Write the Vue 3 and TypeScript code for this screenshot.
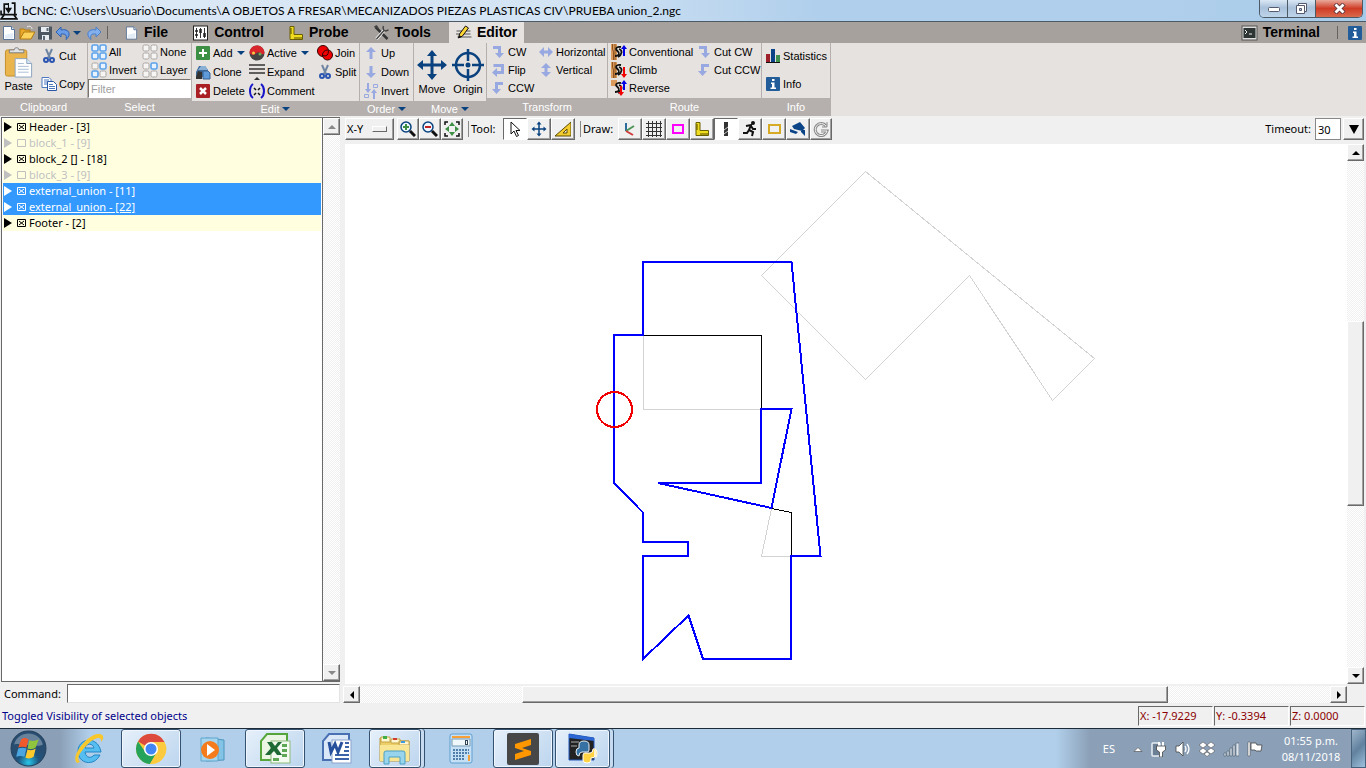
<script setup lang="ts">
import { ref } from 'vue'

interface Tool {
  icon: string
  label: string
  caret?: boolean
  w?: number
}
interface Column {
  kind: string
  items: Tool[]
}
interface Group {
  id: string
  title: string
  caret?: boolean
  columns: Column[]
}

const sheet =
  '<path d="M2.500 1.500h8l3 3v10h-11z" fill="#fff" stroke="#5b7599"/><path d="M10.500 1.500v3h3" fill="#dce8f6" stroke="#5b7599"/><path d="M4 10l8-2v5.500H4z" fill="#e3edf8"/>'
const scissors =
  '<path d="M5 1l4 9M11 1L7 10" stroke="#6f86a3" stroke-width="2" fill="none"/><circle cx="5" cy="12" r="2" fill="none" stroke="#2b55b0" stroke-width="2"/><circle cx="11" cy="12" r="2" fill="none" stroke="#2b55b0" stroke-width="2"/>'
const info =
  '<rect x="1" y="1" width="14" height="14" rx="1" fill="#235d99"/><path d="M7 3h2.500v2H7zM6 6.500h3.500v5H11V13H5.500v-1.500H7V8H6z" fill="#fff"/>'
const ruler =
  '<path d="M2 1.500h4v8h8.500v5H2z" fill="#f0dc1e" stroke="#6b6100"/><path d="M2 4h2M2 6h2M2 8h2M7 12v2.500M9 12v2.500M11 12v2.500M13 12v2.500" stroke="#554c00"/>'
const turnDown = '<path d="M3 2h8v7h3l-4.500 5L5 9h3V5H3z" fill="#98a8e0"/>'
const turnLeft = '<path d="M13 2H5v7H2l4.500 5L11 9H8V5h5z" fill="#98a8e0"/>'
const arrowUp = '<path d="M8 2l5 5H9.500v7h-3V7H3z" fill="#98a8e0"/>'
const arrowDown = '<path d="M8 14l5-5H9.500V2h-3v7H3z" fill="#98a8e0"/>'
const four = (fill: string[]) =>
  [[1, 1], [9, 1], [1, 9], [9, 9]]
    .map(
      ([x, y], i) =>
        `<rect x="${x}" y="${y}" width="6" height="6" rx="1.500" fill="${fill[i] === 'b' ? '#e8f3ff' : '#f6f5f4'}" stroke="${fill[i] === 'b' ? '#5ba3ec' : '#aaa6a3'}" stroke-width="${fill[i] === 'b' ? 1.6 : 1}"/>`,
    )
    .join('')
const wood =
  '<path d="M0 0h6v16H0z" fill="#d99a5b"/><path d="M1.500 0v5l1 3v8M4 0v16" stroke="#8d5320" fill="none"/>'
const cutter =
  '<path d="M10 3c-5-1-6 2-3.500 4s2 5-2.500 5M8 5c4 1 3 6-1 8" fill="none" stroke="#111" stroke-width="1.800"/>'
const blueUp = '<path d="M13 1l3 4h-2v7h-2V5h-2z" fill="#0000e8"/>'
const redDown = '<path d="M13 16l3-4h-2V5h-2v7h-2z" fill="#f00000"/>'
const cross =
  '<path d="M16 1l5 6h-3.500v7.500H25V11l6 5-6 5v-3.500h-7.500V25H21l-5 6-5-6h3.500v-7.500H7V21l-6-5 6-5v3.500h7.500V7H11z" fill="#09427f"/>'
const magnifier =
  '<circle cx="6" cy="6" r="5" fill="#eef7ff" stroke="#09427f" stroke-width="1.500"/><path d="M10 10l5 5" stroke="#111" stroke-width="3"/>'

const icons: Record<string, string> = {
  sheet,
  scissors,
  info,
  ruler,
  turnDown,
  turnLeft,
  arrowUp,
  arrowDown,
  logo: '<path d="M4 11V2h4m3-1h3v10M1 8v4h3m8 0h4M4 12L1 16h15l-3-4z" fill="none" stroke="#111" stroke-width="1.600"/><path d="M8 1v6M5.500 6h5L8 10z" fill="#111" stroke="#111"/>',
  open: '<path d="M1 14V4h4l1 1h5v3H5z" fill="#e8a92a" stroke="#b37a10"/><path d="M1 14L5 7h11l-4 7z" fill="#fbd25c" stroke="#b37a10"/><path d="M8 2c3-2 5 0 5 2" stroke="#eee" fill="none"/>',
  save: '<path d="M1 1.500h14v13H1z" fill="#4c5762"/><path d="M4 2h8v5H4zM5 10h7v5H5z" fill="#e8edf1"/><path d="M9.500 3h2v3h-2zM6 11h2v4H6z" fill="#5d6975"/>',
  undo: '<path d="M1 7l5-5v3c8-2 11 5 5 9.500 1-4 0-6-5-5.500V12z" fill="#6b9ce6" stroke="#2e62b4"/>',
  redo: '<path d="M15 7l-5-5v3c-8-2-11 5-5 9.500-1-4 0-6 5-5.500V12z" fill="#83b0ed" stroke="#4b7fca"/>',
  control:
    '<rect x="1" y="1" width="14" height="14" fill="#fff" stroke="#222"/><path d="M4 3v10M8 3v10M12 3v10" stroke="#333"/><path d="M2.500 10h3M6.500 5h3M6.500 7h3M10.500 9h3M10.500 11h3M2.500 6h3" stroke="#222" stroke-width="1.500"/>',
  tools:
    '<path d="M2 2l12 12" stroke="#333" stroke-width="2.500"/><path d="M3 14l8-9" stroke="#fff" stroke-width="3"/><path d="M3 14l8-9M10 1c-1 2 0 5 2 5l3-1M1 2l2-1 2 3" fill="none" stroke="#444" stroke-width="1.500"/>',
  editor:
    '<path d="M1 6h14M0 9h15M2 12h14" stroke="#555"/><path d="M3 13l1-4 6-8 3 2-6 8z" fill="#ffd633" stroke="#111"/><path d="M3 13l1-3 2 2z" fill="#111"/>',
  terminal:
    '<rect x="1" y="1" width="15" height="14" fill="#ddd" stroke="#555"/><rect x="2.500" y="3" width="12" height="10" fill="#2c3434"/><path d="M4 5l2 2-2 2M8 9h3" fill="none" stroke="#eee"/>',
  paste:
    '<rect x="2" y="3" width="22" height="27" rx="2" fill="#eab54d" stroke="#c58f2a"/><path d="M6 6V3h5c0-3 5-3 5 0h5v3z" fill="#dfe2e4" stroke="#7c7c7c"/><path d="M12 12h12l5 5v14H12z" fill="#fff" stroke="#8aa3c0"/><path d="M24 12v5h5" fill="#dbe7f5" stroke="#8aa3c0"/><path d="M15 17h6M15 20h11M15 23h11M15 26h11" stroke="#a9bdd6"/>',
  copy: '<path d="M1 1.500h7l2 2v8H1z" fill="#fff" stroke="#4f79bd"/><path d="M3 4h5M3 6h5M3 8h3" stroke="#4f79bd"/><path d="M6.500 5.500h6l3 3v6h-9z" fill="#fff" stroke="#2c58a8"/><path d="M8 8.500h4M8 10.500h6M8 12.500h6" stroke="#4f79bd"/>',
  all: four(['b', 'b', 'b', 'b']),
  none: four(['g', 'g', 'g', 'g']),
  invert: four(['g', 'b', 'b', 'g']),
  layer: four(['g', 'b', 'g', 'g']),
  add: '<rect x="1" y="1" width="14" height="14" rx="1" fill="#3c8f43"/><path d="M8 4v8M4 8h8" stroke="#fff" stroke-width="2"/>',
  del: '<rect x="1" y="1" width="14" height="14" rx="1" fill="#a91f24"/><path d="M5 5l6 6M11 5l-6 6" stroke="#fff" stroke-width="2.500"/>',
  clone:
    '<path d="M1 13V8l3-6h6l3 4v7z" fill="#3e6c9c"/><path d="M3 6l3-4h4l3 4z" fill="#8ab0d5"/><path d="M1 13l2-6 4 1v7H1z" fill="#333"/><path d="M8 7h5l2 2v6H8z" fill="#5f9adb" stroke="#37618f"/>',
  active:
    '<circle cx="8" cy="8" r="7.500" fill="#444"/><path d="M.5 8C1-2 15-2 15.500 8c-3 4-5-3-8 0s-5 2-7 0z" fill="#d9262c"/><circle cx="4.500" cy="8" r="1.500" fill="#f1cf45"/><circle cx="11" cy="9" r="1.500" fill="#6dab55"/>',
  expand: '<path d="M0 1h16M0 5h16M0 9h16" stroke="#333" stroke-width="1.500"/><path d="M5 16l3-3 3 3z" fill="#333"/>',
  comment:
    '<path d="M4 1c-4 3-4 11 0 14M12 1c4 3 4 11 0 14" fill="none" stroke="#1717c9" stroke-width="2"/><path d="M5 5l2 2M11 5L9 7M5 12l2-2M11 12l-2-2" stroke="#111" stroke-width="1.500"/>',
  join: '<circle cx="6" cy="6" r="5.500" fill="#f00000" stroke="#300"/><circle cx="10.500" cy="10" r="5" fill="#f00000" stroke="#300"/><path d="M5.500 10.500q6 2 6-5" fill="none" stroke="#300"/>',
  swap: '<path d="M4 0v6H2l3 4 3-4H6V0zM12 16v-6h2l-3-4-3 4h2v6z" fill="#98a8e0"/><path d="M10.500 1.500h4v3h-4zM1.500 11.500h4v3h-4z" fill="none" stroke="#98a8e0"/>',
  move: cross,
  moveSmall: `<g transform="scale(.5)">${cross}</g>`,
  origin:
    '<circle cx="16" cy="16" r="12" fill="none" stroke="#09427f" stroke-width="2.500"/><path d="M16 0v12M16 20v12M0 16h12M20 16h12" stroke="#09427f" stroke-width="2.500"/><circle cx="16" cy="16" r="2.500" fill="#09427f"/>',
  flip: '<path d="M5 5V3.500h7.500v7H6" fill="none" stroke="#98a8e0" stroke-width="3"/><path d="M7 6v9L2 10.500z" fill="#98a8e0"/>',
  horiz: '<path d="M1 8l5-5v3.500h4V3l5 5-5 5V9.500H6V13z" fill="#98a8e0"/>',
  vert: '<path d="M8 1l5 5H9.500v4H13l-5 5-5-5h3.500V6H3z" fill="#98a8e0"/>',
  conv: wood + cutter + blueUp,
  climb: wood + cutter + redDown,
  reverse: '<path d="M0 0h6v6H0z" fill="#d99a5b"/>' + cutter + '<path d="M13 0l3 4h-2v6h-2V4h-2z" fill="#0000e8"/><path d="M10 16l3-4h-2V6H9v6H7z" fill="#f00000"/>',
  stats: '<path d="M1 6h4v8H1z" fill="#9d1f2a"/><path d="M6 1h4v13H6z" fill="#0b4486"/><path d="M11 7h4v7h-4z" fill="#3f9150"/><path d="M1 14.500h14" stroke="#111"/>',
  zoomIn: magnifier + '<path d="M6 3v6M3 6h6" stroke="#3c8f43" stroke-width="2"/>',
  zoomOut: magnifier + '<path d="M3 6h6" stroke="#c21f24" stroke-width="2"/>',
  fit: '<path d="M1 4V1h3M12 1h3v3M15 12v3h-3M4 15H1v-3" fill="none" stroke="#111" stroke-width="1.500"/><path d="M8 1l3 4H5zM8 15l3-4H5zM1 8l4-3v6zM15 8l-4-3v6z" fill="#3c8f43"/>',
  pointer: '<path d="M4 1v12l3-3 2.500 5.500 2-1L9 9.500h4z" fill="#fff" stroke="#111"/>',
  square: '<path d="M0 15L16 1v14z" fill="#f2cc2e" stroke="#5c4a00"/><path d="M8 12l4-4v4z" fill="#eee" stroke="#5c4a00"/>',
  axes: '<path d="M4 2v8" stroke="#2b6c9c" stroke-width="2"/><path d="M4 10l8-5" stroke="#4e9457" stroke-width="2"/><path d="M4 10l7 4" stroke="#cf3b3b" stroke-width="2"/>',
  grid: '<path d="M2.500 0v16M6.500 0v16M10.500 0v16M14.500 0v16M0 2.500h16M0 6.500h16M0 10.500h16M0 14.500h16" stroke="#333"/>',
  magenta: '<rect x="3" y="4" width="10" height="8" fill="none" stroke="#f0f" stroke-width="2"/>',
  endmill: '<path d="M6 1h4v14H6z" fill="#333"/><path d="M6 9l4-3M6 13l4-3" stroke="#ccc"/>',
  runner:
    '<circle cx="11" cy="2" r="2" fill="#111"/><path d="M4 5l5-1-2 5 4 2-1 4M7 9l-2 3H1M9 5l2 3h3" fill="none" stroke="#111" stroke-width="2"/>',
  yellow: '<rect x="3" y="4" width="11" height="8" fill="none" stroke="#d6aa24" stroke-width="2"/>',
  camera: '<path d="M2 5l8-4 5 6-3 3-8-2zM11 9h4v6l-4-4zM0 8l8 3-2 2-6-2z" fill="#0b4486"/>',
  refresh: '<path d="M13 5A6 6 0 1 0 14 10H8" fill="none" stroke="#888" stroke-width="3"/><path d="M13 5A6 6 0 1 0 14 10H8" fill="none" stroke="#f4f4f4"/><path d="M14 1v5H9" stroke="#888" fill="none"/>',
}

const quick: Tool[] = [
  { icon: 'sheet', label: 'New' },
  { icon: 'open', label: 'Open' },
  { icon: 'save', label: 'Save' },
  { icon: 'undo', label: 'Undo', caret: true },
  { icon: 'redo', label: 'Redo' },
]
const tabs: Tool[] = [
  { icon: 'sheet', label: 'File', w: 14 },
  { icon: 'control', label: 'Control', w: 16 },
  { icon: 'ruler', label: 'Probe', w: 15 },
  { icon: 'tools', label: 'Tools', w: 16 },
  { icon: 'editor', label: 'Editor', w: 16 },
]
const activeTab = ref('Editor')

const groups: Group[] = [
  {
    id: 'clipboard',
    title: 'Clipboard',
    columns: [
      { kind: 'big', items: [{ icon: 'paste', label: 'Paste' }] },
      { kind: 'spread', items: [{ icon: 'scissors', label: 'Cut' }, { icon: 'copy', label: 'Copy' }] },
    ],
  },
  {
    id: 'select',
    title: 'Select',
    columns: [
      { kind: 'tight', items: [{ icon: 'all', label: 'All' }, { icon: 'invert', label: 'Invert' }] },
      { kind: 'tight', items: [{ icon: 'none', label: 'None' }, { icon: 'layer', label: 'Layer' }] },
    ],
  },
  {
    id: 'edit',
    title: 'Edit',
    caret: true,
    columns: [
      { kind: 'rows', items: [{ icon: 'add', label: 'Add', caret: true }, { icon: 'clone', label: 'Clone' }, { icon: 'del', label: 'Delete' }] },
      { kind: 'rows', items: [{ icon: 'active', label: 'Active', caret: true }, { icon: 'expand', label: 'Expand' }, { icon: 'comment', label: 'Comment' }] },
      { kind: 'rows', items: [{ icon: 'join', label: 'Join' }, { icon: 'scissors', label: 'Split' }] },
    ],
  },
  {
    id: 'order',
    title: 'Order',
    caret: true,
    columns: [
      { kind: 'rows', items: [{ icon: 'arrowUp', label: 'Up' }, { icon: 'arrowDown', label: 'Down' }, { icon: 'swap', label: 'Invert' }] },
    ],
  },
  {
    id: 'move',
    title: 'Move',
    caret: true,
    columns: [
      { kind: 'big', items: [{ icon: 'move', label: 'Move' }] },
      { kind: 'big', items: [{ icon: 'origin', label: 'Origin' }] },
    ],
  },
  {
    id: 'transform',
    title: 'Transform',
    columns: [
      { kind: 'tight', items: [{ icon: 'turnDown', label: 'CW' }, { icon: 'flip', label: 'Flip' }, { icon: 'turnLeft', label: 'CCW' }] },
      { kind: 'tight', items: [{ icon: 'horiz', label: 'Horizontal' }, { icon: 'vert', label: 'Vertical' }] },
    ],
  },
  {
    id: 'route',
    title: 'Route',
    columns: [
      { kind: 'tight', items: [{ icon: 'conv', label: 'Conventional' }, { icon: 'climb', label: 'Climb' }, { icon: 'reverse', label: 'Reverse' }] },
      { kind: 'tight', items: [{ icon: 'turnDown', label: 'Cut CW' }, { icon: 'turnLeft', label: 'Cut CCW' }] },
    ],
  },
  {
    id: 'info',
    title: 'Info',
    columns: [{ kind: 'spread', items: [{ icon: 'stats', label: 'Statistics' }, { icon: 'info', label: 'Info' }] }],
  },
]

const blocks = ref([
  { name: 'Header - [3]', on: true, selected: false, current: false },
  { name: 'block_1 - [9]', on: false, selected: false, current: false },
  { name: 'block_2 [] - [18]', on: true, selected: false, current: false },
  { name: 'block_3 - [9]', on: false, selected: false, current: false },
  { name: 'external_union - [11]', on: true, selected: true, current: false },
  { name: 'external_union - [22]', on: true, selected: true, current: true },
  { name: 'Footer - [2]', on: true, selected: false, current: false },
])

const zoomTools = ['zoomIn', 'zoomOut', 'fit']
const modeTools = ['pointer', 'moveSmall', 'square']
const drawTools = ['axes', 'grid', 'magenta', 'ruler', 'endmill', 'runner', 'yellow', 'camera', 'refresh']
const pressed = ['pointer', 'endmill']

const filter = ref('')
const command = ref('')
const timeout = ref('30')
const position = ['X: -17.9229', 'Y: -0.3394', 'Z: 0.0000']
</script>

<template>
  <div class="desktop">
    <header class="title-bar">
      <svg class="i18" viewBox="0 0 17 17" v-html="icons.logo" />
      <h1>bCNC: C:\Users\Usuario\Documents\A OBJETOS A FRESAR\MECANIZADOS PIEZAS PLASTICAS CIV\PRUEBA union_2.ngc</h1>
      <div class="win-buttons">
        <button class="wb min" aria-label="Minimize">
          <svg width="14" height="12" viewBox="0 0 14 12"><rect x="1.500" y="4.500" width="11" height="4" rx="1" fill="#fff" stroke="#555a6e" /></svg>
        </button>
        <button class="wb max" aria-label="Restore">
          <svg width="13" height="13" viewBox="0 0 13 13"><path d="M3.500 1.500h8v8h-8z" fill="#fff" stroke="#555a6e" /><path d="M1.500 3.500h8v8h-8z" fill="#fff" stroke="#555a6e" /><path d="M4.500 6.500h2v2h-2z" fill="#b9cce0" stroke="#555a6e" /></svg>
        </button>
        <button class="wb close" aria-label="Close">
          <svg width="13" height="11" viewBox="0 0 13 11"><path d="M2 1l9 9M11 1L2 10" stroke="#60323a" stroke-width="4.500" /><path d="M2.500 1.500l8 8M10.500 1.500l-8 8" stroke="#fff" stroke-width="2.800" /></svg>
        </button>
      </div>
    </header>

    <nav class="menu-bar">
      <div class="quick">
        <button v-for="q in quick" :key="q.label" :class="{ split: q.caret }" :aria-label="q.label">
          <svg class="i16" viewBox="0 0 16 16" v-html="icons[q.icon]" />
          <i v-if="q.caret" class="caret" />
        </button>
      </div>
      <i class="rule" />
      <div class="tabs">
        <button v-for="t in tabs" :key="t.label" class="tab" :class="{ active: activeTab === t.label }" @click="activeTab = t.label">
          <svg :width="t.w" height="16" viewBox="1 0 15 16" v-html="icons[t.icon]" />{{ t.label }}
        </button>
      </div>
      <button class="tab terminal"><svg width="17" height="16" viewBox="0 0 17 16" v-html="icons.terminal" />Terminal</button>
      <i class="rule" />
      <button class="about" aria-label="About"><svg class="i16" viewBox="0 0 16 16" v-html="icons.info" /></button>
    </nav>

    <section class="ribbon">
      <div v-for="g in groups" :key="g.id" class="group" :class="g.id">
        <div class="group-body">
          <div v-for="(c, n) in g.columns" :key="n" class="col" :class="c.kind">
            <button v-for="t in c.items" :key="t.label" class="tool">
              <svg v-if="c.kind === 'big'" class="i32" viewBox="0 0 32 32" v-html="icons[t.icon]" />
              <svg v-else class="i16" viewBox="0 0 16 16" v-html="icons[t.icon]" />
              <span>{{ t.label }}</span><i v-if="t.caret" class="caret" />
            </button>
          </div>
          <input v-if="g.id === 'select'" v-model="filter" class="filter" placeholder="Filter" aria-label="Filter" />
        </div>
        <div class="group-title" :class="{ menu: g.caret }">{{ g.title }}<i v-if="g.caret" class="caret" /></div>
      </div>
    </section>

    <main class="work">
      <aside class="side">
        <div class="editor-list">
          <ul class="blocks">
            <li v-for="b in blocks" :key="b.name" :class="{ off: !b.on, selected: b.selected, current: b.current }">
              <svg width="26" height="16" viewBox="0 0 26 16">
                <path d="M1 3l8 5-8 5z" fill="currentColor" />
                <path d="M14.500 4.500h8v7h-8z" fill="none" stroke="currentColor" />
                <path v-if="b.on" d="M16 6l5 4M21 6l-5 4" stroke="currentColor" />
              </svg><span>{{ b.name }}</span>
            </li>
          </ul>
          <div class="vbar idle">
            <button class="sb" aria-label="Scroll list up"><i class="ar up" /></button>
            <button class="sb" aria-label="Scroll list down"><i class="ar down" /></button>
          </div>
        </div>
        <div class="command">
          <label for="command">Command:</label>
          <input id="command" v-model="command" />
        </div>
      </aside>

      <section class="stage">
        <div class="view-bar">
          <button class="view">X-Y<i /></button>
          <div class="set first">
            <button v-for="t in zoomTools" :key="t" class="tb" :aria-label="t"><svg viewBox="0 0 16 16" v-html="icons[t]" /></button>
          </div>
          <i class="bar" /><span class="cap tool-cap">Tool:</span>
          <div class="set">
            <button v-for="t in modeTools" :key="t" class="tb wide" :class="{ pressed: pressed.includes(t) }" :aria-label="t"><svg viewBox="0 0 16 16" v-html="icons[t]" /></button>
          </div>
          <i class="bar" /><span class="cap draw-cap">Draw:</span>
          <div class="set">
            <button v-for="t in drawTools" :key="t" class="tb" :class="{ wide: t !== 'refresh', pressed: pressed.includes(t) }" :aria-label="t"><svg viewBox="0 0 16 16" v-html="icons[t]" /></button>
          </div>
          <div class="timeout">
            <label for="timeout">Timeout:</label>
            <input id="timeout" v-model="timeout" />
            <button class="drop" aria-label="Timeout values"><svg width="10" height="9" viewBox="0 0 10 9"><path d="M0 0h10L5 9z" /></svg></button>
          </div>
        </div>

        <div class="canvas-grid">
          <svg class="canvas" viewBox="345 144 1002 540" fill="none" shape-rendering="crispEdges">
            <g stroke="#d3d3d3">
              <path d="M865.500 171.500L1094.500 358.500L1052.500 400.500L969.500 275.500L865.500 379.500L761.500 275.500z" />
              <path d="M643.500 335.500V409.500H761.500M771.500 508.500L761.500 556.500H791.500" />
            </g>
            <path d="M643 335.500H761.500V409M771 508.500L791.500 512.500V556" stroke="#000" />
            <g stroke="#0000ff" stroke-width="2">
              <path d="M643 262H791.500L820.500 556H791V659H703L688.500 615.500L643 659V556H688V542H643V512.500L614 483V335H643z" />
              <path d="M658 483H761V409H791.500L771.500 508z" />
            </g>
            <circle cx="614.500" cy="409.500" r="17.500" stroke="#f00000" stroke-width="2" />
          </svg>
          <div class="vbar">
            <button class="sb" aria-label="Scroll up"><i class="ar up" /></button>
            <i class="pad" /><i class="thumb" /><i class="pad end" />
            <button class="sb" aria-label="Scroll down"><i class="ar down" /></button>
          </div>
          <div class="hbar">
            <button class="sb" aria-label="Scroll left"><i class="ar left" /></button>
            <i class="pad" /><i class="thumb" /><i class="pad end" />
            <button class="sb" aria-label="Scroll right"><i class="ar right" /></button>
          </div>
        </div>
      </section>
    </main>

    <div class="status">
      <span class="message">Toggled Visibility of selected objects</span>
      <output v-for="p in position" :key="p">{{ p }}</output>
    </div>

    <footer class="taskbar">
      <button class="task start" aria-label="Start">
        <svg viewBox="0 0 36 36">
          <defs><radialGradient id="orb" cy=".9"><stop offset="0" stop-color="#29c6e8" /><stop offset=".6" stop-color="#1e5580" /><stop offset="1" stop-color="#274d70" /></radialGradient></defs>
          <circle cx="18" cy="18" r="17" fill="url(#orb)" stroke="#26425e" /><path d="M4 14C8 0 28 0 32 14 24 18 12 12 4 14z" fill="#fff" opacity=".3" />
          <path d="M11 9c3-2 4-1 7 0l-2 8c-3-1-5-1-8 0z" fill="#f0592b" /><path d="M19 10c3 1 5 1 9-1l-3 8c-3 2-5 2-8 1z" fill="#8fc63d" /><path d="M8 18c3-1 5-1 8 0l-2 8c-3-1-5-1-8 0z" fill="#4ba5e0" /><path d="M17 19c3 1 5 1 8-1l-2 8c-3 2-5 2-8 1z" fill="#fdc92d" />
        </svg>
      </button>
      <button class="task ie" aria-label="Internet Explorer">
        <svg viewBox="0 0 32 32"><path d="M28 19H12c1 7 7 6 9 3h6C21 34 5 31 5 18S25 2 28 19zM12 15h9c-1-5-8-5-9 0z" fill="#55bdf0" stroke="#2385c4" /><path d="M4 30C-3 24 13 3 24 1c8-1 7 5 4 8 1-7-7-4-13 2S2 25 7 29z" fill="#f8c72c" /></svg>
      </button>
      <button class="task open chrome" aria-label="Chrome">
        <svg viewBox="0 0 32 32"><circle cx="16" cy="16" r="15" fill="#fbca3f" /><path d="M16 16L3 8.500A15 15 0 0 1 29.500 9z" fill="#dd4b3e" /><path d="M3 8.500A15 15 0 0 0 15 31l6-10-10-1z" fill="#25a35a" /><path d="M16 9h13.500A15 15 0 0 1 15 31l8-14z" fill="#fbca3f" /><circle cx="16" cy="16" r="7" fill="#fff" /><circle cx="16" cy="16" r="5.500" fill="#4285f4" /></svg>
      </button>
      <button class="task media" aria-label="Media Player">
        <svg viewBox="0 0 32 32"><path d="M9 5l18 2v20l-18 1z" fill="#83c4e6" stroke="#4f94be" /><path d="M4 5h17v23H4z" fill="#a6d5ee" stroke="#5fa5cc" /><circle cx="13" cy="17" r="9" fill="#f47c1c" /><path d="M10 11l8 6-8 6z" fill="#fff" /></svg>
      </button>
      <button class="task open excel" aria-label="Excel">
        <svg viewBox="0 0 32 32"><path d="M8 1h20v26H2V8z" fill="#eaf5e3" stroke="#55a63a" stroke-width="2" /><rect x="12" y="8" width="19" height="22" fill="#f3faef" stroke="#8dba7d" /><path d="M23 11h5v3h-5zM23 16h5v3h-5zM23 21h5v3h-5zM14 25h6v3h-6z" fill="#5ea755" /><path d="M8 9h5l3 4 3-4h4l-5 6 5 7h-5l-3-4-4 4H6l6-7z" fill="#1e6a34" /></svg>
      </button>
      <button class="task word" aria-label="Word">
        <svg viewBox="0 0 32 32"><path d="M8 1h20v26H2V8z" fill="#dbe8f8" stroke="#4a70b4" stroke-width="2" /><rect x="11" y="7" width="19" height="23" fill="#fff" stroke="#8ba3cc" /><path d="M24 10h4M24 14h4M23 18h5M14 22h14M14 26h14" stroke="#3c62a8" stroke-width="2" /><path d="M8 9l2 10 4-8 3 8 4-10" fill="none" stroke="#27509c" stroke-width="3" /></svg>
      </button>
      <button class="task open explorer stacked" aria-label="Explorer">
        <svg viewBox="0 0 32 32"><path d="M1 28V5h8l2 3h19v20z" fill="#edcf69" stroke="#b8963a" /><path d="M2 4h9v5H2zM12 6h9v4h-9zM20 8h10v4H20z" fill="#fff7d2" stroke="#c4a344" /><path d="M4 3h4v3H4z" fill="#3fae46" /><path d="M14 5h4v2h-4z" fill="#d13c32" /><path d="M22 8h4v2h-4z" fill="#3b9be0" /><path d="M1 12h29v16H1z" fill="#f8e694" /><path d="M5 31V20q0-2 2-2h17q2 0 2 2v11h-5v-7H10v7z" fill="#98d5ed" stroke="#4d9fc4" /></svg>
      </button>
      <button class="task calc" aria-label="Calculator">
        <svg viewBox="0 0 32 32"><rect x="5" y="1" width="22" height="29" rx="2" fill="#c5e0f5" stroke="#5f9fd0" /><path d="M7 3h18v2H7z" fill="#f6a03a" /><path d="M7 6h18v7H7z" fill="#eff7fb" stroke="#7799b0" /><rect x="20.500" y="7.500" width="2" height="4" fill="none" stroke="#345" /><path d="M8 17h16M8 20h16M8 23h12M8 26h12" stroke="#5080aa" stroke-width="2" stroke-dasharray="2 1" /><path d="M23 22h2v6h-2z" fill="#f6a03a" /></svg>
      </button>
      <button class="task open sublime" aria-label="Sublime Text">
        <svg viewBox="0 0 32 32"><rect width="32" height="32" rx="2" fill="#474747" /><path d="M8 11l16-5v6l-9 3 9 3v4L8 27v-6l9-3-9-3z" fill="#ff9800" /></svg>
      </button>
      <button class="task open python stacked" aria-label="Python">
        <svg viewBox="0 0 32 32"><path d="M2 1l25 4v22L2 27z" fill="#222" stroke="#2359bd" /><path d="M2 1l25 4v3L2 5z" fill="#2c66d2" /><path d="M4 9h8M4 13h6" stroke="#aaa" /><path d="M12 15v-3q0-4 5-4t5 4v5q0 2-2 2h-5q-3 0-3 4-3 0-3-4t3-4z" fill="#3671a3" stroke="#e8eef4" /><path d="M28 17v6q0 2-4 2v2q0 3-4 3t-4-3v-5q0-2 2-2h5q3 0 3-4 4-1 4 4t-2 4z" fill="#ffd343" stroke="#fff" /></svg>
      </button>

      <div class="tray">
        <span class="lang">ES</span>
        <svg class="chev" viewBox="0 0 10 16"><path d="M1 10.500l4-4 4 4z" fill="#fff" stroke="#444" stroke-width=".6" /></svg>
        <svg viewBox="0 0 16 16"><rect x="1" y="2" width="8" height="13" rx="1" fill="#6c8095" stroke="#e8eef4" stroke-width="1.500" /><path d="M8 1v4M12 1v4" stroke="#fff" stroke-width="2" /><path d="M5.500 5h9v4l-3 2v5h-3v-5l-3-2z" fill="#fff" stroke="#444" stroke-width=".8" /></svg>
        <svg viewBox="0 0 16 16"><path d="M1 5h3l4-4v14l-4-4H1z" fill="#fff" stroke="#444" stroke-width=".8" /><path d="M10 5q2 3 0 6M12 3q4 5 0 10" fill="none" stroke="#fff" stroke-width="1.300" /></svg>
        <svg viewBox="0 0 16 16"><path d="M4 1l4 3-4 3-4-3zM12 1l4 3-4 3-4-3zM4 7l4 3-4 3-4-3zM12 7l4 3-4 3-4-3zM8 11l3 2-3 2.500L5 13z" fill="#fff" stroke="#444" stroke-width=".5" /></svg>
        <svg viewBox="0 0 16 16"><path d="M1 12h2v3H1zM4 10h2v5H4zM7 7h2v8H7zM10 4h2v11h-2zM13 2h3v13h-3z" fill="#dde4ec" stroke="#4c5b6b" stroke-width=".6" /></svg>
        <svg viewBox="0 0 16 16"><path d="M1 1h2v14H1z" fill="#fff" stroke="#444" stroke-width=".5" /><path d="M4 2h5l1 2h5l-1 6H9L8 9H4z" fill="#fff" stroke="#444" stroke-width=".8" /></svg>
        <time class="clock"><span>01:55 p.m.</span><span>08/11/2018</span></time>
      </div>
      <button class="peek" aria-label="Show desktop" />
    </footer>
  </div>
</template>

<style>
body {
  margin: 0;
}
</style>

<style scoped>
* {
  box-sizing: border-box;
}
.desktop {
  display: flex;
  flex-direction: column;
  height: 100vh;
  overflow: hidden;
  background: #f0f0f0;
  color: #000;
  font: 11px/16px 'Noto Sans', 'Open Sans', sans-serif;
}
button {
  padding: 0;
  border: 0;
  background: none;
  color: inherit;
  font: inherit;
}
input {
  min-width: 0;
  padding: 0 2px;
  font: inherit;
  border: 1px solid #a0a0a0;
  border-radius: 0;
  background: #fff;
}
svg {
  flex: none;
  display: block;
}
.i16 {
  width: 16px;
  height: 16px;
}
.i18 {
  width: 18px;
  height: 18px;
}
.i32 {
  width: 32px;
  height: 32px;
}
.caret {
  display: inline-block;
  border: 4px solid transparent;
  border-top: 4px solid #09427f;
  border-bottom: 0;
}

.title-bar {
  display: flex;
  flex: none;
  align-items: center;
  height: 22px;
  border-bottom: 1px solid #4c5a66;
  background: linear-gradient(90deg, #dfeaf6, #d3e4f4 40%, #b0cfec 60%, #b0cfec 85%, #a6cbe9);
}
.title-bar h1 {
  flex: 1;
  margin: 0 0 0 4px;
  font: 400 12px/20px Lato, 'Open Sans', sans-serif;
  white-space: nowrap;
}
.win-buttons {
  display: flex;
  align-self: flex-start;
  height: 18px;
  margin-right: 3px;
  border: 1px solid #4c5a66;
  border-top: 0;
  border-radius: 0 0 5px 5px;
  overflow: hidden;
}
.wb {
  display: flex;
  align-items: center;
  justify-content: center;
  width: 28px;
  border-right: 1px solid #4c5a66;
  background: linear-gradient(#dbe8f4, #a9c1da 45%, #bed4ea);
}
.wb.close {
  width: 46px;
  border: 0;
  background: linear-gradient(#e9a99b, #cf3c25 50%, #da6a4d);
}

.menu-bar {
  display: flex;
  flex: none;
  align-items: center;
  height: 21px;
  background: #a6a19d;
}
.quick {
  display: flex;
  gap: 2px;
  padding-left: 1px;
}
.quick button {
  display: flex;
  align-items: center;
  gap: 2px;
}
.quick .split {
  padding-right: 3px;
}
.rule {
  width: 1px;
  height: 13px;
  margin: 0 5px;
  background: #66625f;
}
.tabs {
  display: flex;
  flex: 1;
  gap: 11px;
  align-self: stretch;
  padding-left: 5px;
}
.tab {
  display: flex;
  align-items: center;
  gap: 5px;
  height: 21px;
  padding: 0 7px;
  font: bold 14px/21px 'Liberation Sans', Arial, sans-serif;
}
.tab.active {
  background: #e6e2df;
}
.terminal {
  margin-right: 5px;
}
.about {
  margin: 0 3px 0 4px;
}

.ribbon {
  display: flex;
  flex: none;
  height: 73px;
  background: #e6e2df;
  font: 11px/16px 'Liberation Sans', Arial, sans-serif;
}
.group {
  display: flex;
  flex-direction: column;
  border-right: 1px solid #b5b0ad;
}
.group-body {
  display: flex;
  flex: 1;
  flex-wrap: wrap;
  align-content: flex-start;
}
.group-title {
  display: flex;
  align-items: center;
  justify-content: center;
  gap: 3px;
  height: 18px;
  background: #b5b0ad;
  color: #fff;
}
.group-title.menu {
  height: 15px;
}
.col {
  display: flex;
  flex-direction: column;
}
.tool {
  display: flex;
  align-items: center;
  gap: 2px;
  height: 18px;
  white-space: nowrap;
}
.rows .tool {
  height: 19px;
}
.rows .caret {
  margin-left: 2px;
}
.spread {
  gap: 10px;
  padding-top: 4px;
}
.big {
  align-items: center;
  padding-top: 6px;
}
.big .tool {
  flex-direction: column;
  gap: 0;
  height: auto;
}
.clipboard {
  width: 88px;
}
.clipboard .big {
  width: 37px;
  padding-top: 4px;
}
.clipboard .big svg {
  height: 31px;
}
.clipboard .spread {
  padding-left: 4px;
}
.select {
  width: 104px;
}
.select .col {
  width: 51px;
  padding-left: 3px;
}
.filter {
  width: 103px;
  height: 19px;
  border-color: #77736f #fff #fff #77736f;
}
.filter::placeholder {
  color: #a0a0a0;
  opacity: 1;
}
.edit {
  width: 168px;
}
.edit .col {
  width: 54px;
  padding-left: 3px;
}
.edit .col:nth-child(2) {
  width: 70px;
}
.edit .col:nth-child(3) {
  width: 43px;
  padding-left: 1px;
}
.order {
  width: 54px;
}
.order .col {
  padding-left: 3px;
}
.move {
  width: 73px;
}
.move .col {
  width: 36px;
}
.transform {
  width: 121px;
}
.transform .col {
  width: 50px;
  padding-left: 3px;
}
.transform .col + .col {
  padding-left: 1px;
}
.route {
  width: 154px;
}
.route .col {
  width: 88px;
  padding-left: 3px;
}
.route .col + .col {
  width: 64px;
  padding-left: 0;
}
.info {
  width: 69px;
}
.info .col {
  padding-left: 3px;
}

.work {
  display: flex;
  flex: 1;
  min-height: 0;
}
.side {
  display: flex;
  flex: none;
  flex-direction: column;
  width: 340px;
  padding: 1px 0 0 1px;
}
.editor-list {
  display: flex;
  flex: 1;
  border: 1px solid #696969;
  border-right: 0;
  background: #fff;
}
.blocks {
  flex: 1;
  margin: 0;
  padding: 1px;
  border-right: 1px solid #696969;
  list-style: none;
}
.blocks li {
  display: flex;
  height: 16px;
  background: #ffffe0;
}
.blocks .off {
  color: #c0c0c0;
}
.blocks .selected {
  background: #3399ff;
  color: #fff;
}
.blocks .current {
  text-decoration: underline;
}
.vbar {
  display: flex;
  flex-direction: column;
  width: 17px;
}
.vbar,
.hbar {
  background: repeating-conic-gradient(#fff 0 25%, #f0f0f0 0 50%) 0 0 / 2px 2px;
}
.idle {
  justify-content: space-between;
}
.sb,
.thumb,
.tb,
.view,
.drop {
  border: 1px solid;
  border-color: #fff #696969 #696969 #fff;
  box-shadow: inset -1px -1px #a0a0a0;
  background: #f0f0f0;
}
.sb {
  display: flex;
  flex: none;
  align-items: center;
  justify-content: center;
  width: 17px;
  height: 17px;
}
.ar {
  border: 4px solid transparent;
}
.up {
  border-top: 0;
  border-bottom-color: #000;
}
.down {
  border-bottom: 0;
  border-top-color: #000;
}
.left {
  border-left: 0;
  border-right-color: #000;
}
.right {
  border-right: 0;
  border-left-color: #000;
}
.idle .up {
  border-bottom-color: #888;
}
.idle .down {
  border-top-color: #888;
}
.command {
  display: flex;
  align-items: center;
  gap: 6px;
  height: 19px;
  margin-top: 2px;
  padding-left: 3px;
}
.command input {
  flex: 1;
  height: 19px;
  border-color: #696969 #e3e3e3 #e3e3e3 #696969;
}

.stage {
  display: flex;
  flex: 1;
  flex-direction: column;
  min-width: 0;
  padding-left: 3px;
}
.view-bar {
  display: flex;
  flex: none;
  align-items: center;
  height: 28px;
  padding: 0 2px 2px;
}
.view {
  display: flex;
  align-items: center;
  justify-content: space-between;
  width: 49px;
  height: 22px;
  padding: 0 6px 0 1px;
}
.view i {
  width: 15px;
  height: 6px;
  border: 1px solid;
  border-color: #fff #696969 #696969 #fff;
}
.set {
  display: flex;
}
.set.first {
  margin-left: 3px;
}
.tb {
  display: flex;
  align-items: center;
  justify-content: center;
  width: 22px;
  height: 22px;
}
.tb.wide {
  width: 24px;
}
.tb svg {
  width: 16px;
  height: 16px;
}
.tb.pressed {
  border-color: #696969 #fff #fff #696969;
  box-shadow: none;
  background: #fff;
}
.bar {
  width: 1px;
  height: 16px;
  margin-left: 5px;
  background: #888;
}
.cap {
  padding-left: 2px;
}
.tool-cap {
  width: 34px;
}
.draw-cap {
  width: 37px;
}
.timeout {
  display: flex;
  align-items: center;
  gap: 2px;
  margin-left: auto;
}
.timeout label {
  padding-right: 2px;
}
.timeout input {
  width: 26px;
  height: 22px;
  border: 1px solid #888;
}
.drop {
  display: flex;
  align-items: center;
  justify-content: center;
  width: 21px;
  height: 22px;
}
.canvas-grid {
  display: grid;
  flex: 1;
  grid-template: minmax(0, 1fr) 19px / minmax(0, 1fr) 17px;
  min-height: 0;
  padding-right: 2px;
}
.canvas {
  width: 100%;
  height: 100%;
  border-left: 2px solid #f0f0f0;
  background: #fff;
}
.hbar {
  display: flex;
  height: 17px;
  align-self: end;
}
.pad {
  flex: 162;
}
.hbar .thumb {
  flex: 646;
}
.hbar .end {
  flex: 163;
}
.vbar .thumb {
  flex: 186;
}
.vbar .end {
  flex: 163;
}

.status {
  display: flex;
  flex: none;
  align-items: center;
  height: 25px;
  padding: 0 1px 0 2px;
  gap: 1px;
}
.message {
  flex: 1;
  color: #00008b;
}
.status output {
  width: 75px;
  height: 20px;
  padding: 1px;
  border: 1px solid;
  border-color: #696969 #fff #fff #696969;
  color: #8b0000;
}

.taskbar {
  display: flex;
  flex: none;
  height: 40px;
  border-top: 1px solid #1d2a38;
  background: linear-gradient(90deg, #8ba0b7, #8ba0b7 60px, #b1cfeb 90px, #b1cfeb calc(100% - 310px), #8ba0b7 calc(100% - 276px));
}
.task {
  display: flex;
  flex: none;
  align-items: center;
  justify-content: center;
  width: 60px;
}
.task svg {
  width: 32px;
  height: 32px;
}
.start svg {
  width: 37px;
  height: 37px;
}
.start {
  width: 56px;
}
.ie {
  width: 65px;
}
.media {
  width: 64px;
}
.word {
  width: 64px;
}
.calc {
  width: 64px;
}
.open {
  border: 1px solid #34516f;
  border-radius: 3px;
  box-shadow: inset 0 0 0 1px #eff6fd;
  background: linear-gradient(135deg, #e6f0fa, #bcd5ee);
}
.stacked {
  width: 52px;
  margin-right: 8px;
  box-shadow: inset 0 0 0 1px #eff6fd, 3px 0 #c6dbf0, 4px 0 #34516f;
}
.python {
  width: 55px;
  margin-left: 2px;
}
.tray {
  display: flex;
  align-items: center;
  gap: 8px;
  margin-left: auto;
  color: #fff;
}
.tray svg {
  width: 16px;
  height: 16px;
}
.tray .chev {
  width: 10px;
}
.lang {
  margin-right: 10px;
}
.clock {
  display: flex;
  flex-direction: column;
  align-items: center;
  width: 76px;
  margin-left: 2px;
}
.peek {
  width: 15px;
  margin-left: 2px;
  border: 1px solid #47627d;
  background: linear-gradient(135deg, #a0b6cb, #61819f 50%, #9ec1dd);
}
</style>
